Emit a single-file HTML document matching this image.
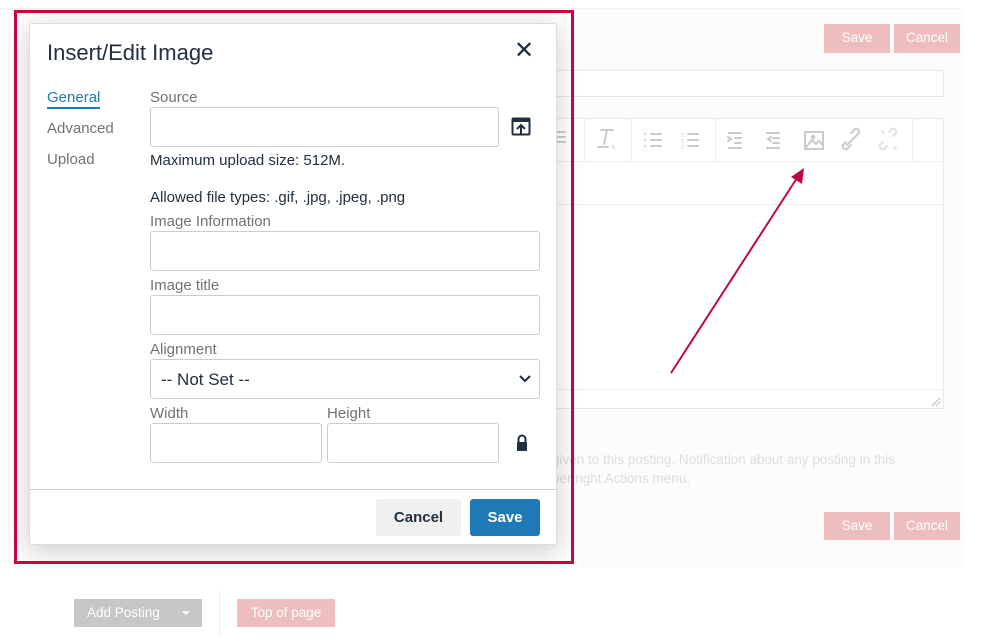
<!DOCTYPE html>
<html><head><meta charset="utf-8"><style>
*{box-sizing:border-box;margin:0;padding:0}
body{width:1005px;height:642px;background:#fff;position:relative;overflow:hidden;font-family:"Liberation Sans",sans-serif}
.a{position:absolute}
.pb{background:#eebebe;color:#fff;font-size:13.5px;text-align:center;line-height:28px}
.lbl{font-size:15px;color:#6f7378}
.in{border:1px solid #ccc;border-radius:3px;background:#fff}
</style></head><body>
<div class="a" style="left:0;top:8px;width:963px;height:560px;background:#fcfcfc;border-top:1px solid #f2f2f2"></div>
<div class="a pb" style="left:824px;top:24px;width:66px;height:29px">Save</div>
<div class="a pb" style="left:894px;top:24px;width:66px;height:29px">Cancel</div>
<div class="a" style="left:555px;top:70px;width:389px;height:27px;border:1px solid #e8e8e8;background:#fff"></div>
<div class="a" style="left:555px;top:118px;width:389px;height:291px;border:1px solid #e8e8e8;background:#fff"></div>
<div class="a" style="left:555px;top:161px;width:389px;height:1px;background:#eee"></div>
<div class="a" style="left:555px;top:204px;width:389px;height:1px;background:#eee"></div>
<div class="a" style="left:555px;top:389px;width:389px;height:1px;background:#eee"></div>
<div class="a" style="left:584px;top:118px;width:1px;height:43px;background:#eee"></div>
<div class="a" style="left:631px;top:118px;width:1px;height:43px;background:#eee"></div>
<div class="a" style="left:715px;top:118px;width:1px;height:43px;background:#eee"></div>
<div class="a" style="left:912px;top:118px;width:1px;height:43px;background:#eee"></div>
<svg class="a" style="left:555px;top:118px" width="389" height="43" fill="none" stroke="#c9cbce" stroke-width="2" stroke-linecap="round">
<path d="M2 14h8M2 19h8M2 24h8"/>
<path d="M46 12h12M52 12l-3 14M43 29h10" /><text x="56" y="31" font-size="8" fill="#c9cbce" stroke="none">x</text>
<path d="M90 16h.1M90 22h.1M90 28h.1M96 16h10M96 22h10M96 28h10"/>
<path d="M133 16h10M133 22h10M133 28h10"/><text x="126" y="19" font-size="5" fill="#c9cbce" stroke="none">1</text><text x="126" y="25" font-size="5" fill="#c9cbce" stroke="none">2</text><text x="126" y="31" font-size="5" fill="#c9cbce" stroke="none">3</text>
<path d="M174 15h12M180 20h6M180 25h6M174 30h12M173 19l3 2-3 2"/>
<path d="M212 15h12M218 20h6M218 25h6M212 30h12M216 19l-3 2 3 2"/>
<rect x="250" y="14" width="18" height="17"/><path d="M251 29l6-7 4 4 3-3 4 4"/><circle cx="258" cy="19" r="1.3" fill="#c9cbce"/>
<path d="M291 24l-3 3a3 3 0 004 4l4-4M301 18l3-3a3 3 0 00-4-4l-4 4M292 27l8-8"/>
<g stroke="#e2e3e5"><path d="M328 24l-3 3a3 3 0 004 4l3-3M338 18l3-3a3 3 0 00-4-4l-3 3M327 13l2 2M339 29l2 2"/></g>
</svg>
<svg class="a" style="left:930px;top:396px" width="12" height="12" stroke="#bbb"><path d="M2 10L10 2M6 10l4-4"/></svg>
<div class="a" style="left:552px;top:450px;font-size:13.5px;color:#ddd;line-height:19px;width:400px">given to this posting. Notification about any posting in this<br>per right Actions menu.</div>
<div class="a pb" style="left:824px;top:512px;width:66px;height:28px">Save</div>
<div class="a pb" style="left:894px;top:512px;width:66px;height:28px">Cancel</div>
<div class="a" style="left:74px;top:599px;width:128px;height:28px;background:#c6c7c9;color:#fff;font-size:13.5px;line-height:28px;padding-left:13px">Add Posting<span style="position:absolute;left:108px;top:12px;border:4px solid transparent;border-top-color:#fff"></span></div>
<div class="a" style="left:219px;top:591px;width:1px;height:44px;background:#eee"></div>
<div class="a pb" style="left:237px;top:599px;width:98px;height:28px">Top of page</div>
<svg class="a" style="left:0;top:0" width="1005" height="642"><path d="M671 373L797 178" stroke="#c0073e" stroke-width="2"/><path d="M804 168l-13 9 11 7z" fill="#c0073e"/></svg>
<div class="a" style="left:14px;top:10px;width:560px;height:554px;border:3px solid #c8073e"></div>
<div class="a" style="left:29px;top:23px;width:528px;height:522px;background:#fff;border:1px solid #ddd;border-radius:3px;box-shadow:0 6px 24px rgba(0,0,0,.18)">
<div class="a" style="left:17px;top:16px;font-size:22px;color:#222f3e">Insert/Edit Image</div>
<div class="a" style="left:484px;top:12px;font-size:24px;color:#222f3e">✕</div>
<div class="a" style="left:17px;top:65px;font-size:15px;color:#207ab7;border-bottom:2px solid #207ab7;padding-bottom:1px">General</div>
<div class="a lbl" style="left:17px;top:96px">Advanced</div>
<div class="a lbl" style="left:17px;top:127px">Upload</div>
<div class="a lbl" style="left:120px;top:65px">Source</div>
<div class="a in" style="left:120px;top:83px;width:349px;height:40px"></div>
<svg class="a" style="left:481px;top:93px" width="20" height="20"><rect x="1.5" y="1.5" width="17" height="16" rx="1" fill="none" stroke="#222f3e" stroke-width="2"/><rect x="1" y="1" width="18" height="4" fill="#222f3e"/><path d="M10 18V9M6 12l4-4 4 4" fill="none" stroke="#222f3e" stroke-width="2"/></svg>
<div class="a" style="left:120px;top:128px;font-size:15px;color:#222f3e">Maximum upload size: 512M.</div>
<div class="a" style="left:120px;top:165px;font-size:15px;color:#222f3e">Allowed file types: .gif, .jpg, .jpeg, .png</div>
<div class="a lbl" style="left:120px;top:189px">Image Information</div>
<div class="a in" style="left:120px;top:207px;width:390px;height:40px"></div>
<div class="a lbl" style="left:120px;top:253px">Image title</div>
<div class="a in" style="left:120px;top:271px;width:390px;height:40px"></div>
<div class="a lbl" style="left:120px;top:317px">Alignment</div>
<div class="a in" style="left:120px;top:335px;width:390px;height:40px;font-size:17px;color:#222f3e;padding:10px 0 0 10px">-- Not Set --<svg style="position:absolute;right:8px;top:15px" width="12" height="8"><path d="M1 1l5 5 5-5" fill="none" stroke="#222f3e" stroke-width="2"/></svg></div>
<div class="a lbl" style="left:120px;top:381px">Width</div>
<div class="a lbl" style="left:297px;top:381px">Height</div>
<div class="a in" style="left:120px;top:399px;width:172px;height:40px"></div>
<div class="a in" style="left:297px;top:399px;width:172px;height:40px"></div>
<svg class="a" style="left:485px;top:410px" width="14" height="18"><path d="M3.5 8V5a3.5 3.5 0 017 0v3" fill="none" stroke="#222f3e" stroke-width="2"/><rect x="2" y="8" width="10" height="9" rx="1" fill="#222f3e"/></svg>
<div class="a" style="left:0;top:465px;width:526px;height:1px;background:#ccc"></div>
<div class="a" style="left:346px;top:475px;width:85px;height:37px;background:#f0f0f0;border-radius:3px;font-size:15px;font-weight:bold;color:#222f3e;text-align:center;line-height:37px">Cancel</div>
<div class="a" style="left:440px;top:475px;width:70px;height:37px;background:#207ab7;border-radius:3px;font-size:15px;font-weight:bold;color:#fff;text-align:center;line-height:37px">Save</div>
</div>
</body></html>
